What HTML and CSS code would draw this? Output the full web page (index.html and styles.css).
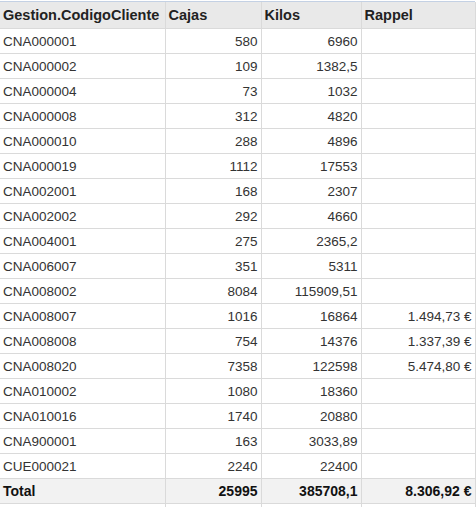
FILE: index.html
```html
<!DOCTYPE html>
<html lang="es">
<head>
<meta charset="utf-8">
<title>Rappel</title>
<link rel="stylesheet" href="styles.css">
</head>
<body>
<div class="grid">
<table>
<colgroup><col class="c1"><col class="c2"><col class="c3"><col class="c4"></colgroup>
<thead>
<tr><th>Gestion.CodigoCliente</th><th>Cajas</th><th>Kilos</th><th>Rappel</th></tr>
</thead>
<tbody>
<tr><td>CNA000001</td><td class="n">580</td><td class="n">6960</td><td class="n"></td></tr>
<tr><td>CNA000002</td><td class="n">109</td><td class="n">1382,5</td><td class="n"></td></tr>
<tr><td>CNA000004</td><td class="n">73</td><td class="n">1032</td><td class="n"></td></tr>
<tr><td>CNA000008</td><td class="n">312</td><td class="n">4820</td><td class="n"></td></tr>
<tr><td>CNA000010</td><td class="n">288</td><td class="n">4896</td><td class="n"></td></tr>
<tr><td>CNA000019</td><td class="n">1112</td><td class="n">17553</td><td class="n"></td></tr>
<tr><td>CNA002001</td><td class="n">168</td><td class="n">2307</td><td class="n"></td></tr>
<tr><td>CNA002002</td><td class="n">292</td><td class="n">4660</td><td class="n"></td></tr>
<tr><td>CNA004001</td><td class="n">275</td><td class="n">2365,2</td><td class="n"></td></tr>
<tr><td>CNA006007</td><td class="n">351</td><td class="n">5311</td><td class="n"></td></tr>
<tr><td>CNA008002</td><td class="n">8084</td><td class="n">115909,51</td><td class="n"></td></tr>
<tr><td>CNA008007</td><td class="n">1016</td><td class="n">16864</td><td class="n">1.494,73 €</td></tr>
<tr><td>CNA008008</td><td class="n">754</td><td class="n">14376</td><td class="n">1.337,39 €</td></tr>
<tr><td>CNA008020</td><td class="n">7358</td><td class="n">122598</td><td class="n">5.474,80 €</td></tr>
<tr><td>CNA010002</td><td class="n">1080</td><td class="n">18360</td><td class="n"></td></tr>
<tr><td>CNA010016</td><td class="n">1740</td><td class="n">20880</td><td class="n"></td></tr>
<tr><td>CNA900001</td><td class="n">163</td><td class="n">3033,89</td><td class="n"></td></tr>
<tr><td>CUE000021</td><td class="n">2240</td><td class="n">22400</td><td class="n"></td></tr>
<tr class="total"><td>Total</td><td class="n">25995</td><td class="n">385708,1</td><td class="n">8.306,92 €</td></tr>
<tr class="filler"><td></td><td></td><td></td><td></td></tr>
</tbody>
</table>
</div>
</body>
</html>
```
FILE: styles.css
```css
html, body {
  margin: 0;
  padding: 0;
  background: #ffffff;
}
body {
  font-family: "Liberation Sans", Arial, sans-serif;
  font-size: 13.5px;
  color: #333333;
  padding-top: 1px;
}
.grid {
  width: 475px;
  border-top: 1px solid #c4d1e4;
}
table {
  border-collapse: collapse;
  table-layout: fixed;
  width: 475px;
}
.c1 { width: 165px; }
.c2 { width: 96px; }
.c3 { width: 100px; }
.c4 { width: 114px; }
th, td {
  border: 1px solid #dadada;
  padding: 0 3px;
  height: 24px;
  white-space: nowrap;
  overflow: hidden;
}
th:first-child, td:first-child {
  border-left: none;
}
thead th {
  border-top: none;
  background: #e9e9e9;
  text-align: left;
  font-weight: bold;
  font-size: 14.5px;
  color: #222222;
  height: 26px;
}
.n {
  text-align: right;
}
.total td {
  background: #f2f2f2;
  font-weight: bold;
  font-size: 14px;
  color: #111111;
}
.filler td {
  height: 3px;
  padding: 0;
  border-bottom: none;
}
```
